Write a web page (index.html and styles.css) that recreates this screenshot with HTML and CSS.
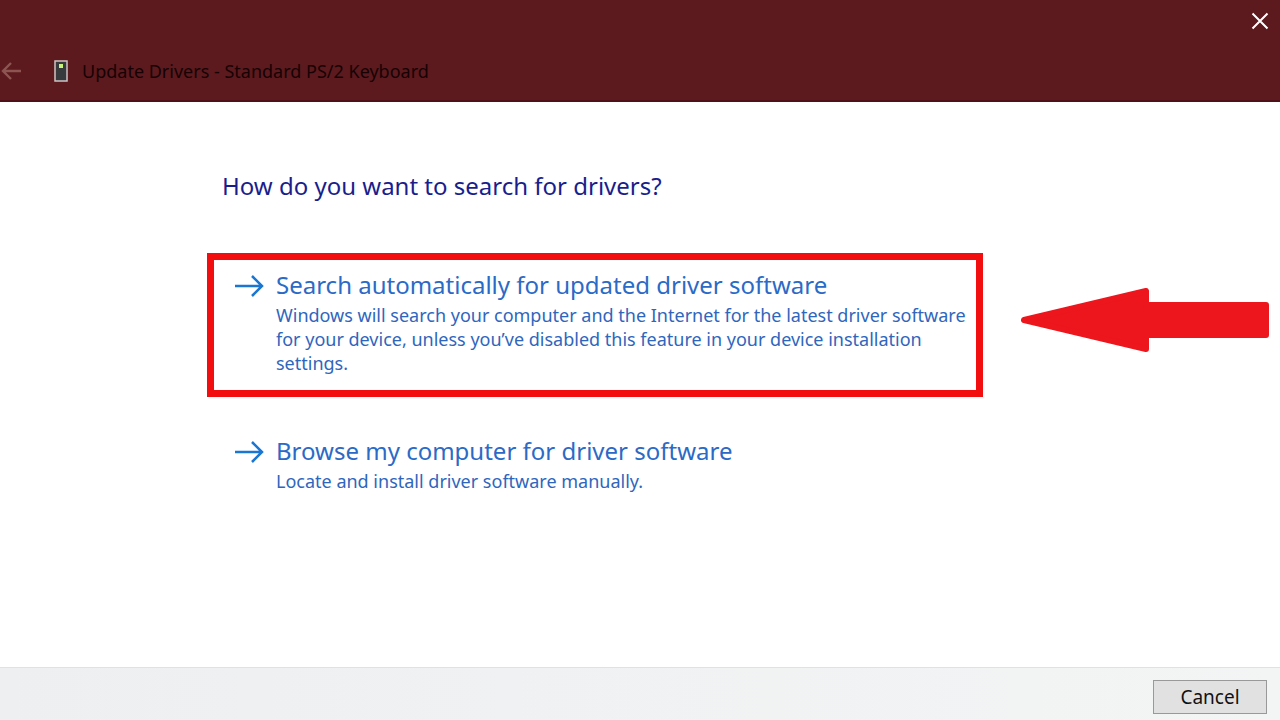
FILE: index.html
```html
<!DOCTYPE html>
<html lang="en">
<head>
<meta charset="utf-8">
<title>Update Drivers</title>
<link rel="stylesheet" href="styles.css">
</head>
<body>
<header class="titlebar">
  <div class="window-controls">
    <button class="icon-button" type="button" aria-label="Close">
      <svg width="18" height="18" viewBox="0 0 18 18"><path d="M1.5 1.5 16.500 16.500M16.500 1.500 1.500 16.500" fill="none" stroke="#fff" stroke-width="2"/></svg>
    </button>
  </div>
  <div class="title-row">
    <button class="icon-button" type="button" aria-label="Back">
      <svg width="22" height="20" viewBox="0 0 22 20"><path d="M21 10H3M11 2 3 10l8 8" fill="none" stroke="#8c5552" stroke-width="2.400"/></svg>
    </button>
    <svg class="device-icon" width="14" height="22" viewBox="0 0 14 22"><rect x="1" y="1" width="12" height="20" fill="#373b3e" stroke="#cfc3c4" stroke-width="1.500"/><rect x="5" y="4" width="4" height="4" fill="#c8f47c"/></svg>
    <h1 class="title">Update Drivers - Standard PS/2 Keyboard</h1>
  </div>
</header>
<main class="content">
  <h2 class="question">How do you want to search for drivers?</h2>
  <div class="option-row">
    <button class="option option-marked" type="button">
      <svg class="option-arrow" width="30" height="22" viewBox="0 0 30 22"><path d="M1 11H28M18 1 28 11 18 21" fill="none" stroke="#1976d2" stroke-width="2.500"/></svg>
      <span class="option-text">
        <span class="option-title">Search automatically for updated driver software</span>
        <span class="option-note">Windows will search your computer and the Internet for the latest driver software for your device, unless you’ve disabled this feature in your device installation settings.</span>
      </span>
    </button>
    <svg class="pointer" width="250" height="66" viewBox="0 0 250 66"><path d="M4 33 126 4V18H246V48H126V62Z" fill="#ed161d" stroke="#ed161d" stroke-width="6" stroke-linejoin="round"/></svg>
  </div>
  <div class="option-row">
    <button class="option" type="button">
      <svg class="option-arrow" width="30" height="22" viewBox="0 0 30 22"><path d="M1 11H28M18 1 28 11 18 21" fill="none" stroke="#1976d2" stroke-width="2.500"/></svg>
      <span class="option-text">
        <span class="option-title">Browse my computer for driver software</span>
        <span class="option-note">Locate and install driver software manually.</span>
      </span>
    </button>
  </div>
</main>
<footer class="footer">
  <button class="cancel" type="button">Cancel</button>
</footer>
</body>
</html>
```
FILE: styles.css
```css
* { box-sizing: border-box; }

body {
  display: flex;
  flex-direction: column;
  min-height: 100vh;
  margin: 0;
  background: #fff;
  font-family: "Noto Sans", "Open Sans", sans-serif;
}

button { font-family: inherit; cursor: pointer; }

.titlebar {
  padding-bottom: 14px;
  background: #5c1a1e;
  border-bottom: 2px solid #4f1117;
}

.window-controls {
  display: flex;
  justify-content: flex-end;
  padding: 12px 11px 26px 0;
}

.icon-button {
  display: flex;
  padding: 0;
  border: 0;
  background: none;
}

.title-row { display: flex; align-items: center; height: 30px; }

.device-icon { margin: 0 14px 0 32px; }

.title {
  margin: 0;
  color: #160204;
  font-size: 18px;
  font-weight: 400;
  line-height: 30px;
}

.content { flex: 1; padding: 65px 10px 24px 207px; }

.question {
  margin: 0 0 49px 15px;
  color: #1a1e8c;
  font-size: 24px;
  font-weight: 400;
  line-height: 37px;
}

.option-row { display: flex; align-items: center; gap: 37px; }

.option {
  display: flex;
  flex: 1;
  align-items: flex-start;
  gap: 12px;
  padding: 7px 0 15px 20px;
  border: 7px solid transparent;
  background: none;
  color: #2f66bd;
  text-align: left;
}

.option-marked { margin-bottom: 22px; border-color: #f20d0f; }

.option-arrow { flex: none; margin-top: 8px; }

.option-text { display: flex; flex: 1; flex-direction: column; }

.option-title { font-size: 24px; line-height: 36px; color: #2b6ac6; }

.option-note { font-size: 18px; line-height: 24px; }

.pointer { flex: none; margin-bottom: 32px; }

.footer {
  display: flex;
  justify-content: flex-end;
  padding: 12px 13px 6px;
  background: linear-gradient(90deg, #eeeff1, #f3f4f4);
  border-top: 1px solid #dfe1e4;
}

.cancel {
  min-width: 114px;
  padding: 0 16px;
  border: 1px solid #999;
  background: #e1e1e1;
  color: #111;
  font-size: 19px;
  line-height: 32px;
}
```
